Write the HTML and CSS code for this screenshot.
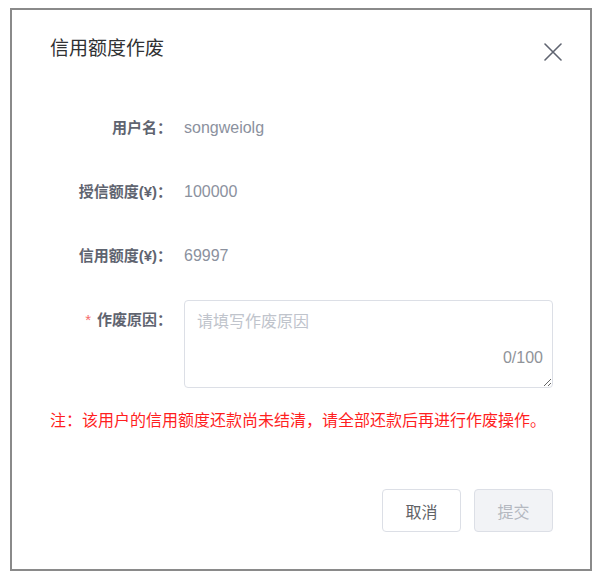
FILE: index.html
```html
<!DOCTYPE html>
<html lang="zh-CN">
<head>
<meta charset="utf-8">
<title>信用额度作废</title>
<link rel="stylesheet" href="styles.css">
</head>
<body>
<div class="dialog">
  <div class="dialog-header">
    <span class="dialog-title">信用额度作废</span>
    <button class="dialog-close" aria-label="关闭">
      <svg width="18" height="18" viewBox="0 0 18 18"><path d="M1 1 L17 17 M17 1 L1 17" stroke="#5f6470" stroke-width="1.6" fill="none" stroke-linecap="round"/></svg>
    </button>
  </div>
  <div class="form">
    <div class="form-item">
      <label class="form-label">用户名：</label>
      <div class="form-value">songweiolg</div>
    </div>
    <div class="form-item">
      <label class="form-label">授信额度(¥)：</label>
      <div class="form-value">100000</div>
    </div>
    <div class="form-item">
      <label class="form-label">信用额度(¥)：</label>
      <div class="form-value">69997</div>
    </div>
    <div class="form-item form-item-area">
      <label class="form-label"><span class="required">*</span>作废原因：</label>
      <div class="textarea-wrap">
        <textarea class="textarea" placeholder="请填写作废原因"></textarea>
        <span class="counter">0/100</span>
      </div>
    </div>
  </div>
  <p class="note">注：该用户的信用额度还款尚未结清，请全部还款后再进行作废操作。</p>
  <div class="dialog-footer">
    <button class="btn">取消</button>
    <button class="btn btn-disabled" disabled>提交</button>
  </div>
</div>
</body>
</html>
```
FILE: styles.css
```css
html, body {
  margin: 0;
  padding: 0;
  background: #fff;
}
body {
  font-family: "Liberation Sans", "Noto Sans CJK SC", sans-serif;
  padding: 8px 0 0 10px;
}
.dialog {
  box-sizing: border-box;
  width: 582px;
  height: 563px;
  border: 2px solid #8a8a8a;
  background: #fff;
}
.dialog-header {
  display: flex;
  justify-content: space-between;
  align-items: flex-start;
  padding: 27px 28px 0 38px;
}
.dialog-title {
  font-size: 19px;
  line-height: 24px;
  color: #303133;
}
.dialog-close {
  margin-top: 6px;
  width: 18px;
  height: 18px;
  padding: 0;
  border: 0;
  background: none;
  display: block;
}
.dialog-close svg { display: block; }
.form {
  margin-top: 47px;
  display: flex;
  flex-direction: column;
  gap: 24px;
}
.form-item {
  display: flex;
  align-items: flex-start;
  height: 40px;
}
.form-item-area { height: 88px; }
.form-label {
  box-sizing: border-box;
  width: 160px;
  text-align: right;
  font-size: 15px;
  font-weight: bold;
  line-height: 40px;
  color: #5f6470;
  white-space: nowrap;
}
.required {
  color: #f56c6c;
  font-weight: normal;
  margin-right: 6px;
}
.form-value {
  margin-left: 12px;
  font-size: 16px;
  line-height: 40px;
  color: #8b919e;
}
.textarea-wrap {
  position: relative;
  margin-left: 12px;
  width: 369px;
  height: 88px;
}
.textarea {
  box-sizing: border-box;
  display: block;
  width: 369px;
  height: 88px;
  padding: 11px 12px;
  border: 1px solid #dcdfe6;
  border-radius: 4px;
  font-family: inherit;
  font-size: 16px;
  line-height: 20px;
  color: #606266;
  resize: vertical;
  outline: none;
}
.textarea::placeholder { color: #c0c4cc; }
.counter {
  position: absolute;
  right: 10px;
  top: 48px;
  font-size: 16px;
  line-height: 20px;
  color: #909399;
}
.note {
  margin: 23px 0 0 38px;
  font-size: 16px;
  line-height: 20px;
  color: #ff1f1f;
}
.dialog-footer {
  display: flex;
  justify-content: flex-end;
  gap: 13px;
  margin-top: 58px;
  padding-right: 37px;
}
.btn {
  box-sizing: border-box;
  width: 79px;
  height: 43px;
  border: 1px solid #dcdfe6;
  border-radius: 4px;
  background: #fff;
  font-family: inherit;
  font-size: 16px;
  color: #606266;
  padding: 0;
}
.btn-disabled {
  background: #f2f3f6;
  color: #b4b8c0;
}
```
